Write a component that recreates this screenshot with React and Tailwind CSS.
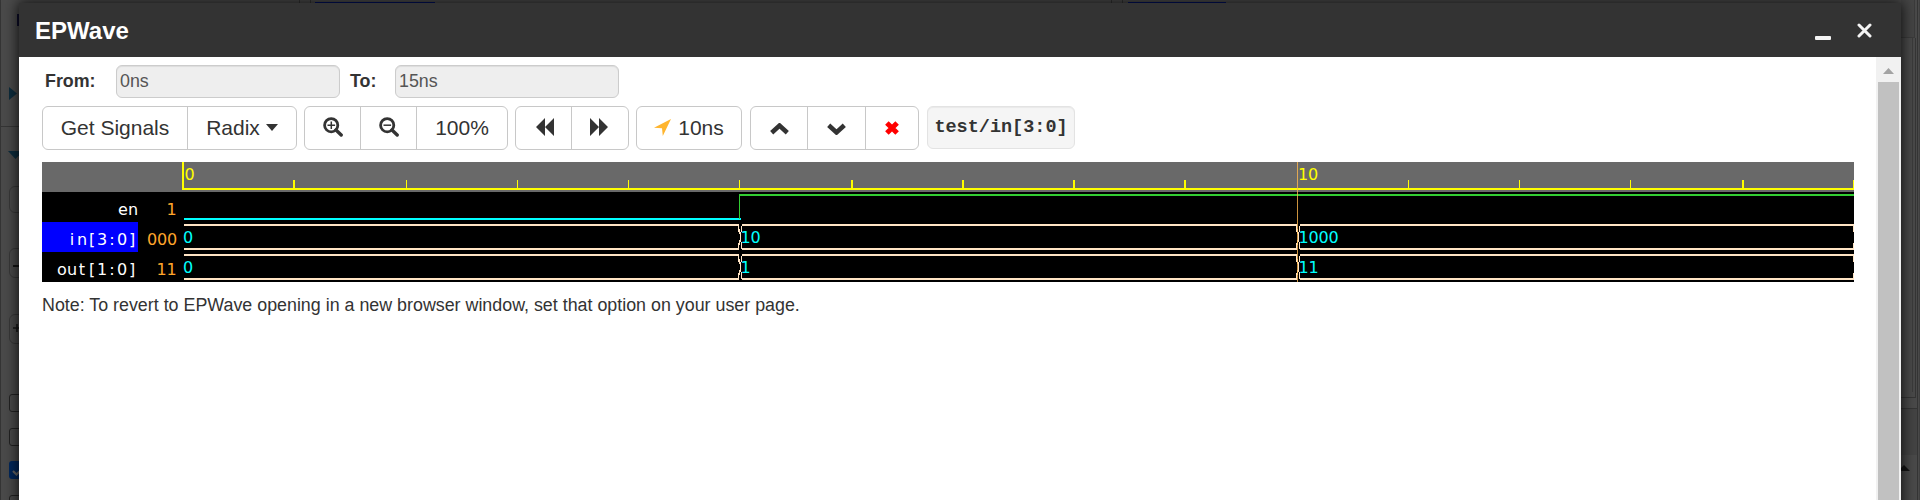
const GLYPHS = '"DejaVu Sans", sans-serif';

// Places each character in a fixed 10px cell, ending or starting at a given edge.
function CellText({ text, start, end, y, fill, cell = 10, size = 16 }) {
  const first = start ?? end - text.length * cell;
  const xs = text.split('').map((_, i) => first + cell * (i + 0.5)).join(' ');
  return (
    <text x={xs} y={y} fill={fill} textAnchor="middle" fontFamily={GLYPHS} fontSize={size}>
      {text}
    </text>
  );
}

function BusSegment({ from, to, y, open }) {
  const l = from;
  const r = to;
  return (
    <g fill="#ffe4c4">
      <rect x={l + (open ? 0 : 2)} y={y} width={r - l - (open ? 1 : 3)} height={2} />
      <rect x={l + (open ? 0 : 2)} y={y + 24} width={r - l - (open ? 1 : 3)} height={2} />
      <rect x={r - 2} y={y} width={1} height={8} />
      <rect x={r - 1} y={y + 5} width={1} height={5} />
      <rect x={r - 2} y={y + 19} width={1} height={7} />
      <rect x={r - 1} y={y + 16} width={1} height={5} />
      {!open && (
        <>
          <rect x={l + 1} y={y + 2} width={1} height={6} />
          <rect x={l} y={y + 8} width={1} height={10} />
          <rect x={l + 1} y={y + 18} width={1} height={7} />
        </>
      )}
    </g>
  );
}

const TICKS = [
  [251, 2], [364, 1], [475, 1], [586, 1], [697, 1], [809, 2], [920, 2],
  [1031, 2], [1142, 2], [1366, 1], [1477, 1], [1588, 1], [1700, 2], [1811, 1],
];

function Waveform() {
  return (
    <svg className="block h-[120px] w-[1812px]" viewBox="0 0 1812 120" shapeRendering="crispEdges">
      <rect width="1812" height="120" fill="#000" />
      <rect width="1812" height="30" fill="#696969" />
      <rect y="60" width="96" height="30" fill="#00f" />
      <g fill="#ff0">
        <rect x="140" y="0" width="2" height="28" />
        <rect x="141" y="26" width="1671" height="2" />
        {TICKS.map(([x, w]) => (
          <rect key={x} x={x} y="18" width={w} height="9" />
        ))}
      </g>
      <CellText text="0" start={142.5} y={18} fill="#ff0" />
      <CellText text="10" start={1256} y={18} fill="#ff0" />

      <CellText text="en" end={96} y={53} fill="#fff" />
      <CellText text="in[3:0]" end={95} y={83} fill="#fff" />
      <CellText text="out[1:0]" end={95} y={113} fill="#fff" />
      <CellText text="1" end={134.5} y={53} fill="#ffa62b" />
      <CellText text="000" end={135} y={83} fill="#ffa62b" />
      <CellText text="11" end={134.5} y={113} fill="#ffa62b" />

      <rect x="142" y="56" width="557" height="2" fill="#0ff" />
      <rect x="697" y="32" width="1" height="25" fill="#32cd32" />
      <rect x="697" y="32" width="1115" height="2" fill="#32cd32" />

      {[62, 92].map((y) => (
        <g key={y}>
          <BusSegment from={142} to={698} y={y} open />
          <BusSegment from={698} to={1256} y={y} />
          <BusSegment from={1256} to={1813} y={y} />
        </g>
      ))}
      <CellText text="0" start={141} y={81} fill="#0ff" />
      <CellText text="0" start={141} y={111} fill="#0ff" />
      <CellText text="10" start={698.5} y={81} fill="#0ff" />
      <CellText text="1" start={698.5} y={111} fill="#0ff" />
      <CellText text="1000" start={1256.5} y={81} fill="#0ff" />
      <CellText text="11" start={1256.5} y={111} fill="#0ff" />
      <rect x="1255" width="1" height="120" fill="#ffb84d" fillOpacity="0.8" />
    </svg>
  );
}

function Group({ className, children }) {
  return (
    <div className={`flex h-11 divide-x divide-[#c8c8c8] rounded-md border border-[#c8c8c8] bg-white ${className}`}>
      {children}
    </div>
  );
}

function Btn({ className, children }) {
  return (
    <button className={`flex items-center justify-center pb-[2px] text-[21px] leading-none text-[#333] ${className}`}>
      {children}
    </button>
  );
}

function Magnifier({ plus }) {
  return (
    <svg className="h-5 w-5" viewBox="0 0 20 20" fill="none" stroke="#333">
      <circle cx="8.2" cy="8.2" r="6.6" strokeWidth="2.8" />
      <path d="M13 13l5.2 5" strokeWidth="3.4" strokeLinecap="round" />
      <path d={plus ? 'M4.5 8.2h7.6M8.3 4.4v7.6' : 'M4.5 8.2h7.6'} strokeWidth="1.5" />
    </svg>
  );
}

function Toolbar() {
  return (
    <div className="mt-2 flex">
      <Group className="w-[255px]">
        <Btn className="w-[145px]">Get Signals</Btn>
        <Btn className="flex-1 gap-[6px]">
          Radix
          <svg className="h-[7px] w-3" viewBox="0 0 12 7"><path d="M0 0h12L6 7z" fill="#333" /></svg>
        </Btn>
      </Group>
      <Group className="ml-[7px] w-[204px]">
        <Btn className="w-14"><Magnifier plus /></Btn>
        <Btn className="w-14"><Magnifier /></Btn>
        <Btn className="flex-1">100%</Btn>
      </Group>
      <Group className="ml-[7px] w-[114px]">
        <Btn className="w-14 pl-[2px]">
          <svg className="h-[18px] w-[18px]" viewBox="0 0 18 18"><path d="M9 0v18L0 9zM18 0v18L9 9z" fill="#333" /></svg>
        </Btn>
        <Btn className="flex-1 pr-[3px]">
          <svg className="h-[18px] w-[18px]" viewBox="0 0 18 18"><path d="M0 0v18l9-9zM9 0v18l9-9z" fill="#333" /></svg>
        </Btn>
      </Group>
      <Group className="ml-[7px] w-[106px]">
        <Btn className="flex-1 gap-[7px]">
          <svg className="h-[17px] w-[17px]" viewBox="0 0 17 17"><path d="M17 0L0 8.7l8 .6.8 7.7z" fill="#ffb52e" /></svg>
          10ns
        </Btn>
      </Group>
      <Group className="ml-2 w-[169px]">
        <Btn className="w-[57px]">
          <svg className="mt-[3px] h-3 w-[19px]" viewBox="0 0 19 12"><path d="M1.7 9.8l7.8-7.2 7.8 7.2" fill="none" stroke="#333" strokeWidth="4.6" /></svg>
        </Btn>
        <Btn className="w-[58px]">
          <svg className="mt-[3px] h-3 w-[19px]" viewBox="0 0 19 12"><path d="M1.7 2.2l7.8 7.2 7.8-7.2" fill="none" stroke="#333" strokeWidth="4.6" /></svg>
        </Btn>
        <Btn className="flex-1">
          <svg className="mt-[2px] h-[14px] w-[14px]" viewBox="0 0 14 14"><path d="M1.9 1.9l10.2 10.2M12.1 1.9L1.9 12.1" fill="none" stroke="#f00" strokeWidth="5" /></svg>
        </Btn>
      </Group>
      <div className="ml-2 flex h-[43px] w-[148px] items-center justify-center rounded-md border border-[#e3e3e3] bg-[#f5f5f5] pt-px font-['Liberation_Mono',monospace] text-[18.5px] font-bold leading-none text-[#333] shadow-[inset_0_1px_1px_rgba(0,0,0,0.05)]">
        test/in[3:0]
      </div>
    </div>
  );
}

function TimeRange() {
  const input =
    'flex h-[33px] w-56 items-center rounded-md border border-[#ccc] bg-[#eee] pl-[3px] pt-px text-[17.85px] text-[#555] shadow-[inset_0_1px_1px_rgba(0,0,0,0.075)]';
  return (
    <div className="flex text-[17.85px] leading-none">
      <div className="flex w-[74px] items-center pt-px pl-[3px] font-bold text-[#333]">From:</div>
      <div className={input}>0ns</div>
      <div className="flex w-[55px] items-center pt-px pl-[10px] font-bold text-[#333]">To:</div>
      <div className={input}>15ns</div>
    </div>
  );
}

function LeftGutter() {
  return (
    <div className="h-[500px] w-[19px] shrink-0 overflow-hidden border-l border-[#353535] text-[#151515]">
      <div className="ml-4 mt-[14px] h-3 w-1 bg-[#0d0d2b]" />
      <svg className="ml-2 mt-[61px] block h-[13px] w-2" viewBox="0 0 8 13"><path d="M0 0l8 6.5L0 13z" fill="#0d2c3d" /></svg>
      <div className="mt-[26px] h-px bg-[#353535]" />
      <svg className="ml-[7px] mt-[24px] block h-2 w-[15px]" viewBox="0 0 15 8"><path d="M0 0h15L7.5 8z" fill="#0d2c3d" /></svg>
      <div className="ml-2 mt-[27px] h-[27px] w-10 rounded-md border border-[#383838]" />
      <div className="ml-2 mt-[35px] h-[30px] w-10 rounded-md border border-[#383838] pt-4"><div className="ml-[3px] h-[2px] w-[6px] bg-[#151515]" /></div>
      <div className="ml-2 mt-9 h-[30px] w-10 rounded-md border border-[#383838] pl-[3px] pt-[9px]">
        <svg className="block h-2 w-2" viewBox="0 0 8 8"><path d="M0 4h8M4 0v8" stroke="#151515" strokeWidth="1.6" /></svg>
      </div>
      <div className="ml-2 mt-[50px] h-[18px] w-[18px] rounded-[3px] border border-[#222]" />
      <div className="ml-2 mt-4 h-[18px] w-[18px] rounded-[3px] border border-[#222]" />
      <div className="ml-2 mt-[15px] h-[18px] w-[18px] rounded-[3px] bg-[#02285c] pl-[3px] pt-[7px]">
        <svg className="block h-2 w-3" viewBox="0 0 12 8"><path d="M1 3l3.5 3.5L11 0" fill="none" stroke="#666" strokeWidth="2.2" /></svg>
      </div>
      <div className="ml-2 mt-4 h-[18px] w-[18px] rounded-[3px] border border-[#222]" />
    </div>
  );
}

function RightGutter() {
  return (
    <div className="flex h-[500px] w-[19px] shrink-0 border-r border-[#404040] bg-[#4a4a4a]">
      <div className="flex w-[17px] flex-col border-r border-[#353535]">
        <div className="h-[38px] w-[14px] border-b border-r border-[#3b3b3b] bg-[#454545]" />
        <div className="h-[360px] w-[15px] border-b border-r border-[#353535]">
          <div className="h-[354px] w-3 border-r border-[#3b3b3b]" />
        </div>
        <div className="mt-[10px] h-[47px] w-4 border-t border-[#353535] bg-[#444]" />
        <svg className="mt-[10px] block h-[6px] w-[9px]" viewBox="0 0 9 6"><path d="M0 3L3 0l6 6H0z" fill="#151515" /></svg>
      </div>
    </div>
  );
}

export default function App() {
  return (
    <div className="flex h-[500px] w-[1920px] overflow-hidden bg-[#4a4a4a] font-['Liberation_Sans',Arial,sans-serif]">
      <LeftGutter />
      <div className="flex w-[1882px] flex-col">
        <div className="flex h-[3px] shrink-0 items-end">
          <div className="ml-[280px] h-[3px] w-3 border-x border-[#333]" />
          <div className="ml-1 h-px w-[120px] bg-[#001060]" />
          <div className="ml-[676px] h-[3px] w-3 border-x border-[#333]" />
          <div className="ml-[5px] h-px w-[98px] bg-[#001060]" />
        </div>
        <div className="relative z-10 flex h-[520px] shrink-0 flex-col bg-white shadow-[0_0_13px_1px_rgba(0,0,0,0.8)]">
          <header className="flex h-[54px] shrink-0 items-center justify-between bg-[#333] pl-4">
            <h1 className="pt-px text-[24px] font-bold leading-none text-white">EPWave</h1>
            <div className="mr-[29px] flex items-center gap-[26px]">
              <div className="mt-[15px] h-1 w-4 rounded-[1px] bg-[#f4f4f4]" />
              <svg className="h-[15px] w-[15px]" viewBox="0 0 15 15"><path d="M2 2l11 11M13 2L2 13" stroke="#f4f4f4" strokeWidth="3" strokeLinecap="round" /></svg>
            </div>
          </header>
          <div className="flex flex-1">
            <main className="flex flex-1 flex-col pl-[23px] pt-2">
              <TimeRange />
              <Toolbar />
              <div className="mt-3"><Waveform /></div>
              <p className="mt-[13px] text-[17.85px] leading-5 text-[#333]">
                Note: To revert to EPWave opening in a new browser window, set that option on your user page.
              </p>
            </main>
            <div className="flex w-[25px] flex-col items-center bg-[#f1f1f1]">
              <div className="flex h-[25px] items-center pt-[2px]">
                <svg className="h-[6px] w-[11px]" viewBox="0 0 11 6"><path d="M0 6L5.5 0 11 6z" fill="#a3a3a3" /></svg>
              </div>
              <div className="w-[21px] flex-1 bg-[#c1c1c1]" />
            </div>
          </div>
        </div>
      </div>
      <RightGutter />
    </div>
  );
}
